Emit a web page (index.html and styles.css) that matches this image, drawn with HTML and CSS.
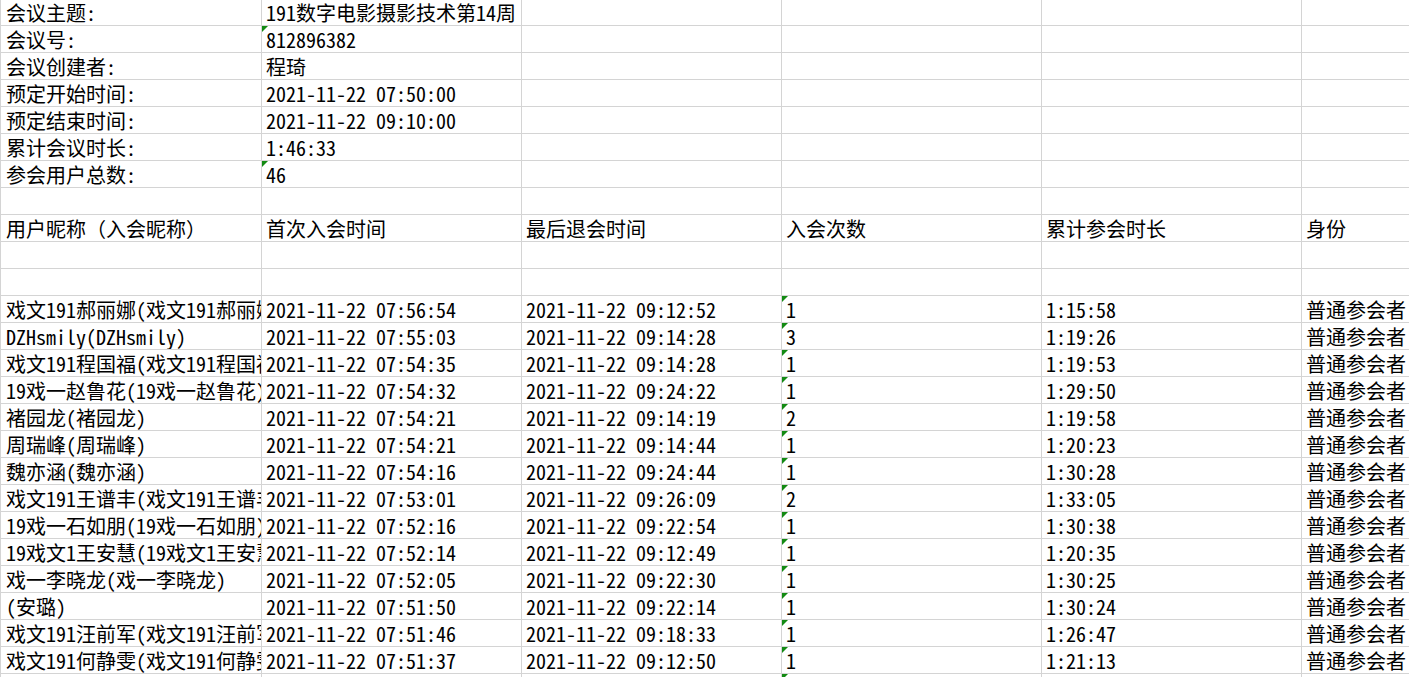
FILE: index.html
```html
<!DOCTYPE html>
<html lang="zh-CN">
<head>
<meta charset="utf-8">
<title>会议报表</title>
<link rel="stylesheet" href="styles.css">
</head>
<body>
<div class="sheet">
  <div class="row"><div class="c">会议主题:</div><div class="c">191数字电影摄影技术第14周</div><div class="c"></div><div class="c"></div><div class="c"></div><div class="c"></div></div>
  <div class="row"><div class="c">会议号:</div><div class="c tri">812896382</div><div class="c"></div><div class="c"></div><div class="c"></div><div class="c"></div></div>
  <div class="row"><div class="c">会议创建者:</div><div class="c">程琦</div><div class="c"></div><div class="c"></div><div class="c"></div><div class="c"></div></div>
  <div class="row"><div class="c">预定开始时间:</div><div class="c">2021-11-22 07:50:00</div><div class="c"></div><div class="c"></div><div class="c"></div><div class="c"></div></div>
  <div class="row"><div class="c">预定结束时间:</div><div class="c">2021-11-22 09:10:00</div><div class="c"></div><div class="c"></div><div class="c"></div><div class="c"></div></div>
  <div class="row"><div class="c">累计会议时长:</div><div class="c">1:46:33</div><div class="c"></div><div class="c"></div><div class="c"></div><div class="c"></div></div>
  <div class="row"><div class="c">参会用户总数:</div><div class="c tri">46</div><div class="c"></div><div class="c"></div><div class="c"></div><div class="c"></div></div>
  <div class="row"><div class="c"></div><div class="c"></div><div class="c"></div><div class="c"></div><div class="c"></div><div class="c"></div></div>
  <div class="row"><div class="c fw">用户昵称（入会昵称）</div><div class="c">首次入会时间</div><div class="c">最后退会时间</div><div class="c">入会次数</div><div class="c">累计参会时长</div><div class="c">身份</div></div>
  <div class="row"><div class="c"></div><div class="c"></div><div class="c"></div><div class="c"></div><div class="c"></div><div class="c"></div></div>
  <div class="row"><div class="c"></div><div class="c"></div><div class="c"></div><div class="c"></div><div class="c"></div><div class="c"></div></div>
  <div class="row"><div class="c">戏文191郝丽娜(戏文191郝丽娜)</div><div class="c">2021-11-22 07:56:54</div><div class="c">2021-11-22 09:12:52</div><div class="c tri">1</div><div class="c">1:15:58</div><div class="c">普通参会者</div></div>
  <div class="row"><div class="c">DZHsmily(DZHsmily)</div><div class="c">2021-11-22 07:55:03</div><div class="c">2021-11-22 09:14:28</div><div class="c tri">3</div><div class="c">1:19:26</div><div class="c">普通参会者</div></div>
  <div class="row"><div class="c">戏文191程国福(戏文191程国福)</div><div class="c">2021-11-22 07:54:35</div><div class="c">2021-11-22 09:14:28</div><div class="c tri">1</div><div class="c">1:19:53</div><div class="c">普通参会者</div></div>
  <div class="row"><div class="c">19戏一赵鲁花(19戏一赵鲁花)</div><div class="c">2021-11-22 07:54:32</div><div class="c">2021-11-22 09:24:22</div><div class="c tri">1</div><div class="c">1:29:50</div><div class="c">普通参会者</div></div>
  <div class="row"><div class="c">褚园龙(褚园龙)</div><div class="c">2021-11-22 07:54:21</div><div class="c">2021-11-22 09:14:19</div><div class="c tri">2</div><div class="c">1:19:58</div><div class="c">普通参会者</div></div>
  <div class="row"><div class="c">周瑞峰(周瑞峰)</div><div class="c">2021-11-22 07:54:21</div><div class="c">2021-11-22 09:14:44</div><div class="c tri">1</div><div class="c">1:20:23</div><div class="c">普通参会者</div></div>
  <div class="row"><div class="c">魏亦涵(魏亦涵)</div><div class="c">2021-11-22 07:54:16</div><div class="c">2021-11-22 09:24:44</div><div class="c tri">1</div><div class="c">1:30:28</div><div class="c">普通参会者</div></div>
  <div class="row"><div class="c">戏文191王谱丰(戏文191王谱丰)</div><div class="c">2021-11-22 07:53:01</div><div class="c">2021-11-22 09:26:09</div><div class="c tri">2</div><div class="c">1:33:05</div><div class="c">普通参会者</div></div>
  <div class="row"><div class="c">19戏一石如朋(19戏一石如朋)</div><div class="c">2021-11-22 07:52:16</div><div class="c">2021-11-22 09:22:54</div><div class="c tri">1</div><div class="c">1:30:38</div><div class="c">普通参会者</div></div>
  <div class="row"><div class="c">19戏文1王安慧(19戏文1王安慧)</div><div class="c">2021-11-22 07:52:14</div><div class="c">2021-11-22 09:12:49</div><div class="c tri">1</div><div class="c">1:20:35</div><div class="c">普通参会者</div></div>
  <div class="row"><div class="c">戏一李晓龙(戏一李晓龙)</div><div class="c">2021-11-22 07:52:05</div><div class="c">2021-11-22 09:22:30</div><div class="c tri">1</div><div class="c">1:30:25</div><div class="c">普通参会者</div></div>
  <div class="row"><div class="c">(安璐)</div><div class="c">2021-11-22 07:51:50</div><div class="c">2021-11-22 09:22:14</div><div class="c tri">1</div><div class="c">1:30:24</div><div class="c">普通参会者</div></div>
  <div class="row"><div class="c">戏文191汪前军(戏文191汪前军)</div><div class="c">2021-11-22 07:51:46</div><div class="c">2021-11-22 09:18:33</div><div class="c tri">1</div><div class="c">1:26:47</div><div class="c">普通参会者</div></div>
  <div class="row"><div class="c">戏文191何静雯(戏文191何静雯)</div><div class="c">2021-11-22 07:51:37</div><div class="c">2021-11-22 09:12:50</div><div class="c tri">1</div><div class="c">1:21:13</div><div class="c">普通参会者</div></div>
  <div class="row"><div class="c"></div><div class="c"></div><div class="c"></div><div class="c tri"></div><div class="c"></div><div class="c"></div></div>
</div>
</body>
</html>
```

FILE: styles.css
```css
html, body {
  margin: 0;
  padding: 0;
  background: #fff;
  overflow: hidden;
}
body {
  width: 1409px;
  height: 677px;
}
.sheet {
  margin-top: -1px;
  border-left: 1px solid #d4d4d4;
  width: 1561px;
  font-family: "Noto Sans Mono CJK SC", "Noto Sans CJK SC", sans-serif;
  font-feature-settings: "hwid" 1;
  font-size: 20px;
  color: #000;
}
.row {
  display: grid;
  grid-template-columns: 261px 260px 260px 260px 260px 260px;
  height: 27px;
}
.c {
  position: relative;
  box-sizing: border-box;
  height: 27px;
  border-right: 1px solid #d4d4d4;
  border-bottom: 1px solid #d4d4d4;
  padding: 0 0 0 4px;
  line-height: 27px;
  white-space: nowrap;
  overflow: hidden;
}
.row > .c:first-child {
  padding-left: 5px;
}
.c.fw {
  font-feature-settings: normal;
}
.tri::before {
  content: "";
  position: absolute;
  left: 0;
  top: 0;
  width: 6px;
  height: 6px;
  background: #138a13;
  clip-path: polygon(0 0, 100% 0, 0 100%);
}
```
